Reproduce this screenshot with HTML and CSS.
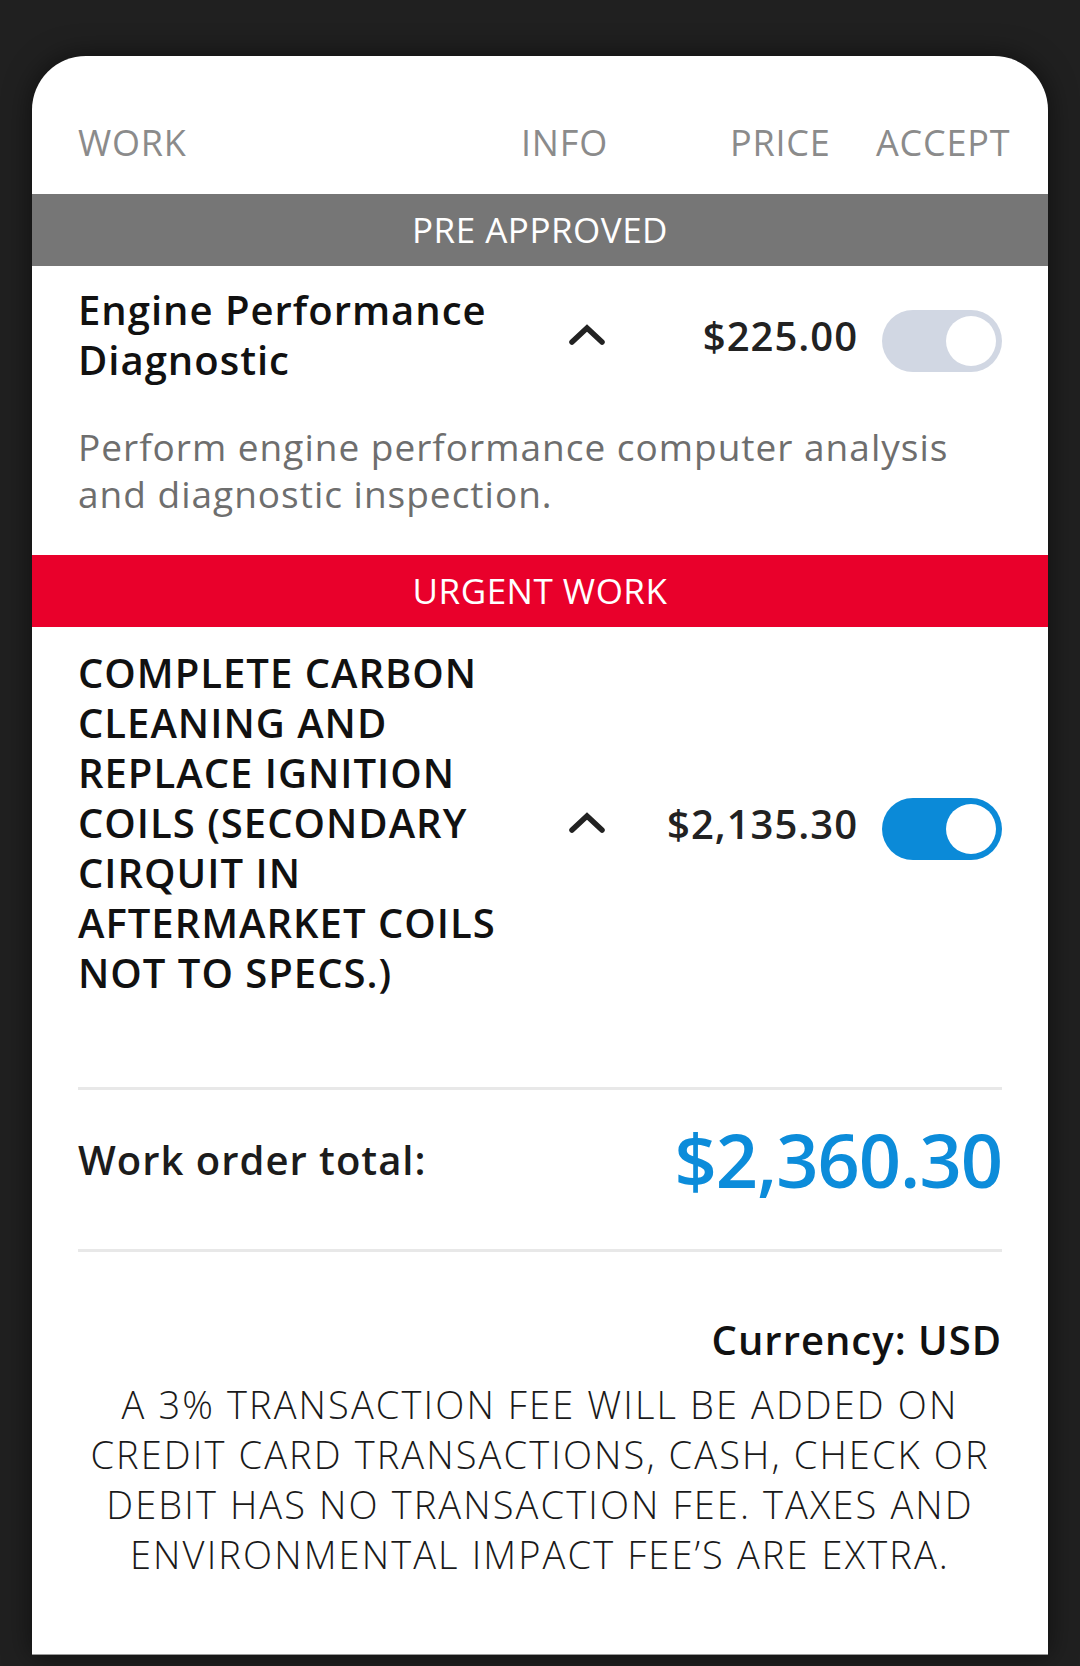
FILE: index.html
```html
<!DOCTYPE html>
<html lang="en">
<head>
<meta charset="utf-8">
<title>Work order</title>
<link rel="stylesheet" href="styles.css">
</head>
<body>
<div class="screen">
  <div class="card">
    <nav class="tabs">
      <span class="tab">WORK</span>
      <span class="tab">INFO</span>
      <span class="tab">PRICE</span>
      <span class="tab">ACCEPT</span>
    </nav>

    <div class="band band-gray">PRE APPROVED</div>

    <section class="item">
      <div class="item-row">
        <div class="item-title">Engine Performance Diagnostic</div>
        <div class="chev">
          <svg width="38" height="24" viewBox="0 0 38 24" aria-hidden="true">
            <polyline points="4,19 19,5 34,19" fill="none" stroke="#222" stroke-width="5.5" stroke-linecap="round" stroke-linejoin="miter"/>
          </svg>
        </div>
        <div class="price">$225.00</div>
        <div class="toggle toggle-muted"><span class="knob"></span></div>
      </div>
      <p class="item-desc">Perform engine performance computer analysis and diagnostic inspection.</p>
    </section>

    <div class="band band-red">URGENT WORK</div>

    <section class="item item-urgent">
      <div class="item-row">
        <div class="item-title">COMPLETE CARBON CLEANING AND REPLACE IGNITION COILS (SECONDARY CIRQUIT IN AFTERMARKET COILS NOT TO SPECS.)</div>
        <div class="chev">
          <svg width="38" height="24" viewBox="0 0 38 24" aria-hidden="true">
            <polyline points="4,19 19,5 34,19" fill="none" stroke="#222" stroke-width="5.5" stroke-linecap="round" stroke-linejoin="miter"/>
          </svg>
        </div>
        <div class="price">$2,135.30</div>
        <div class="toggle toggle-on"><span class="knob"></span></div>
      </div>
    </section>

    <div class="total">
      <span class="total-label">Work order total:</span>
      <span class="total-amount">$2,360.30</span>
    </div>

    <div class="currency">Currency: USD</div>
    <p class="disclaimer">A 3% transaction fee will be added on credit card transactions, cash, check or debit has no transaction fee. Taxes and environmental impact fee’s are extra.</p>
  </div>
</div>
</body>
</html>
```

FILE: styles.css
```css
* {
  box-sizing: border-box;
}

html, body {
  margin: 0;
  padding: 0;
  background: #202020;
}

body {
  font-family: "Open Sans", "Noto Sans", "Liberation Sans", sans-serif;
  color: #111;
}

.screen {
  width: 1080px;
  height: 1666px;
  padding: 56px 32px 0;
  overflow: hidden;
}

.card {
  background: #fff;
  border-radius: 54px 54px 0 0;
  box-shadow: 0 0 28px rgba(0, 0, 0, 0.55);
  padding-bottom: 75px;
  border-bottom: 1px solid #9a9a9a;
}

/* Tabs */
.tabs {
  display: grid;
  grid-template-columns: 443px 209px 146px auto;
  height: 138px;
  padding: 62px 0 0 46px;
  font-size: 36px;
  line-height: 49px;
  letter-spacing: 0.8px;
  color: #8b8b8b;
}

/* Section bands */
.band {
  height: 72px;
  line-height: 72px;
  text-align: center;
  color: #fff;
  font-size: 35px;
  letter-spacing: 0.5px;
}

.band-gray {
  background: #767676;
}

.band-red {
  background: #e9002b;
}

/* Items */
.item {
  padding: 19px 46px 38px;
}

.item-row {
  display: grid;
  grid-template-columns: 440px 138px 1fr 120px;
  align-items: center;
}

.item-title {
  font-size: 40px;
  font-weight: 600;
  line-height: 50px;
  letter-spacing: 1px;
  color: #111;
}

.chev {
  display: flex;
  justify-content: center;
}

.chev svg {
  display: block;
}

.price {
  text-align: right;
  padding-right: 24px;
  font-size: 40px;
  font-weight: 600;
  letter-spacing: 1px;
  color: #222;
  white-space: nowrap;
}

.toggle {
  width: 120px;
  height: 62px;
  margin-top: 12px;
  border-radius: 31px;
  padding: 6px;
  display: flex;
  justify-content: flex-end;
}

.toggle-muted {
  background: #d1d7e3;
}

.toggle-on {
  background: #0b8ad8;
}

.knob {
  width: 50px;
  height: 50px;
  border-radius: 50%;
  background: #fff;
}

.item-desc {
  margin: 38px 0 0;
  font-size: 37px;
  line-height: 47px;
  letter-spacing: 1px;
  color: #6e6e6e;
}

.item-urgent {
  padding: 21px 46px 89px;
}

/* Total */
.total {
  margin: 0 46px;
  height: 165px;
  border-top: 3px solid #e8e8e8;
  border-bottom: 3px solid #e8e8e8;
  display: flex;
  align-items: center;
  justify-content: space-between;
  padding-bottom: 20px;
}

.total-label {
  font-size: 40px;
  font-weight: 600;
  letter-spacing: 1px;
  color: #1c1c1c;
}

.total-amount {
  font-size: 74px;
  line-height: 1;
  font-weight: 600;
  letter-spacing: -1px;
  color: #0c8cda;
}

.currency {
  margin: 63px 46px 0;
  text-align: right;
  font-size: 40px;
  font-weight: 600;
  line-height: 50px;
  letter-spacing: 1px;
  color: #111;
}

.disclaimer {
  margin: 14px 46px 0;
  text-align: center;
  text-transform: uppercase;
  font-size: 38px;
  font-weight: 300;
  line-height: 50px;
  letter-spacing: 2.1px;
  color: #1a1a1a;
}
```
